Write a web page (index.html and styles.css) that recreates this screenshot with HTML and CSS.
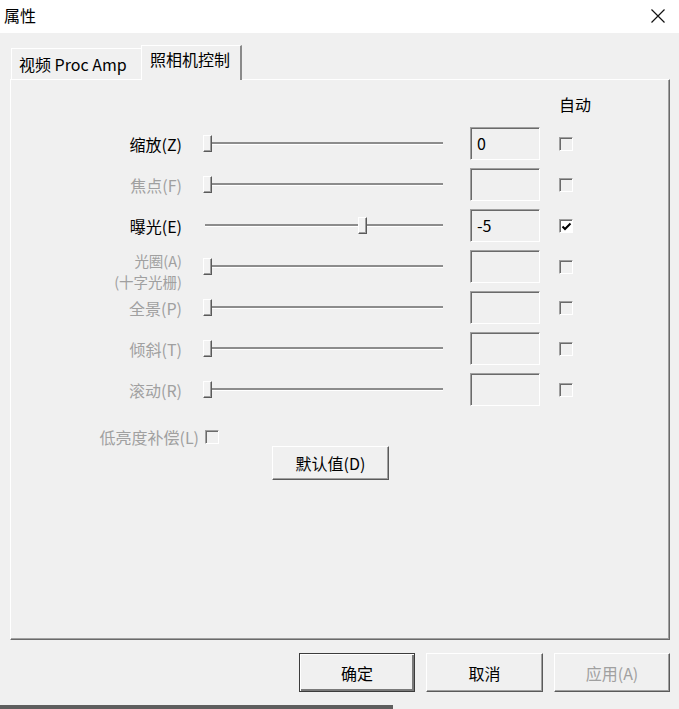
FILE: index.html
```html
<!DOCTYPE html>
<html lang="zh-CN">
<head>
    <meta charset="UTF-8">
    <title>属性</title>
    <link rel="stylesheet" href="styles.css">
</head>
<body>
    <div class="window">
        <div class="titlebar">
            <span class="title">属性</span>
            <svg class="close" width="16" height="16" viewBox="0 0 16 16">
                <path d="M1.5 1.5 L14.5 14.5 M14.5 1.5 L1.5 14.5" stroke="#111" stroke-width="1.2" fill="none"/>
            </svg>
        </div>

        <div class="content">
            <div class="tabs">
                <div class="tab">视频 Proc Amp</div>
                <div class="tab active">照相机控制</div>
            </div>

            <div class="panel">
                <div class="head-row">自动</div>

                <div class="grid">
                    <div class="label">缩放(Z)</div>
                    <div class="slider"><div class="track"></div><div class="thumb" style="left: 0px"></div></div>
                    <div class="box">0</div>
                    <div class="check-cell"><span class="check"></span></div>

                    <div class="label off">焦点(F)</div>
                    <div class="slider"><div class="track"></div><div class="thumb" style="left: 0px"></div></div>
                    <div class="box"></div>
                    <div class="check-cell"><span class="check"></span></div>

                    <div class="label">曝光(E)</div>
                    <div class="slider"><div class="track"></div><div class="thumb" style="left: 155px"></div></div>
                    <div class="box">-5</div>
                    <div class="check-cell">
                        <span class="check on">
                            <svg width="11" height="11" viewBox="0 0 11 11"><path d="M1.5 5.5 L4 8 L9.5 2.5" stroke="#000" stroke-width="2" fill="none"/></svg>
                        </span>
                    </div>

                    <div class="label off two"><span>光圈(A)</span><span>(十字光栅)</span></div>
                    <div class="slider"><div class="track"></div><div class="thumb" style="left: 0px"></div></div>
                    <div class="box"></div>
                    <div class="check-cell"><span class="check"></span></div>

                    <div class="label off">全景(P)</div>
                    <div class="slider"><div class="track"></div><div class="thumb" style="left: 0px"></div></div>
                    <div class="box"></div>
                    <div class="check-cell"><span class="check"></span></div>

                    <div class="label off">倾斜(T)</div>
                    <div class="slider"><div class="track"></div><div class="thumb" style="left: 0px"></div></div>
                    <div class="box"></div>
                    <div class="check-cell"><span class="check"></span></div>

                    <div class="label off">滚动(R)</div>
                    <div class="slider"><div class="track"></div><div class="thumb" style="left: 0px"></div></div>
                    <div class="box"></div>
                    <div class="check-cell"><span class="check"></span></div>
                </div>

                <div class="lowlight">
                    <span class="off">低亮度补偿(L)</span>
                    <span class="check"></span>
                </div>

                <div class="default-row">
                    <button class="btn default">默认值(D)</button>
                </div>
            </div>

            <div class="footer">
                <button class="btn ok">确定</button>
                <button class="btn cancel">取消</button>
                <button class="btn apply off">应用(A)</button>
            </div>
        </div>

        <div class="edge"></div>
    </div>
</body>
</html>
```

FILE: styles.css
```css
body {
    margin: 0;
    background: #f0f0f0;
    font-family: "Noto Sans CJK SC", "Noto Sans", sans-serif;
    font-size: 16px;
    color: #000;
}

.window {
    width: 679px;
    height: 709px;
    display: flex;
    flex-direction: column;
    overflow: hidden;
}

.titlebar {
    height: 33px;
    background: #fff;
    display: flex;
    align-items: center;
    justify-content: space-between;
    padding: 0 13px 0 4px;
    flex-shrink: 0;
}

.title {
    font-size: 16px;
    line-height: 20px;
    margin-top: -3px;
}

.close {
    margin-top: -1px;
}

.content {
    padding-top: 12px;
    flex: 1;
}

/* tabs */
.tabs {
    display: flex;
    align-items: flex-end;
    padding-left: 11px;
    height: 35px;
    margin-bottom: -1px;
}

.tab {
    box-sizing: border-box;
    height: 31px;
    margin-bottom: 1px;
    width: 131px;
    padding: 4px 0 0 7px;
    line-height: 22px;
    border-top: 1px solid #fff;
    border-left: 1px solid #fff;
    border-right: 1px solid #d0d0d0;
    white-space: nowrap;
}

.tab.active {
    position: relative;
    z-index: 1;
    height: 35px;
    margin-bottom: 0;
    width: 101px;
    margin-left: -1px;
    padding: 2px 0 0 8px;
    background: #f0f0f0;
    border-right: 2px solid #8a8a8a;
}

/* panel */
.panel {
    box-sizing: border-box;
    margin-left: 10px;
    width: 660px;
    height: 561px;
    border-top: 1px solid #fff;
    border-left: 1px solid #fff;
    border-right: 1px solid #6a6a6a;
    border-bottom: 1px solid #6a6a6a;
    box-shadow: inset -1px -1px 0 #a0a0a0;
}

.head-row {
    margin-top: 14px;
    height: 20px;
    line-height: 20px;
    padding-left: 548px;
    margin-bottom: 9px;
}

.grid {
    display: grid;
    grid-template-columns: 172px 287px 70px auto;
    grid-auto-rows: 41px;
    align-items: center;
}

.label {
    text-align: right;
    padding-right: 1px;
    line-height: 18px;
}

.label.two {
    display: flex;
    flex-direction: column;
    align-items: flex-end;
    margin-top: 9px;
    font-size: 14.5px;
    line-height: 21px;
}

.off {
    color: #a0a0a0;
}

.slider {
    position: relative;
    margin-left: 20px;
    width: 240px;
    height: 17px;
}

.track {
    margin: 7px 0 0 2px;
    height: 2px;
    background: #8c8c8c;
    border-bottom: 1px solid #fff;
}

.thumb {
    position: absolute;
    top: 0;
    box-sizing: border-box;
    width: 9px;
    height: 17px;
    background: #f2f2f2;
    border-top: 1px solid #fff;
    border-left: 1px solid #fff;
    border-right: 1px solid #5a5a5a;
    border-bottom: 1px solid #5a5a5a;
    box-shadow: inset -1px -1px 0 #a0a0a0;
}

.box {
    box-sizing: border-box;
    width: 70px;
    height: 33px;
    padding: 4px 0 0 6px;
    line-height: 22px;
    border-top: 1px solid #a0a0a0;
    border-left: 1px solid #a0a0a0;
    border-right: 1px solid #fff;
    border-bottom: 1px solid #fff;
    box-shadow: inset 1px 1px 0 #6a6a6a;
}

.check-cell {
    padding-left: 19px;
    padding-top: 1px;
    display: flex;
    align-items: center;
}

.check {
    box-sizing: border-box;
    display: inline-flex;
    align-items: center;
    justify-content: center;
    width: 14px;
    height: 14px;
    border-top: 1px solid #a0a0a0;
    border-left: 1px solid #a0a0a0;
    border-right: 1px solid #fff;
    border-bottom: 1px solid #fff;
    box-shadow: inset 1px 1px 0 #6a6a6a;
    background: #f0f0f0;
}

.check.on {
    background: #fff;
}

.check.on svg {
    margin: 1px 0 0 1px;
}

.lowlight {
    width: 208px;
    margin-top: 18px;
    height: 18px;
    display: flex;
    justify-content: flex-end;
    align-items: center;
    gap: 6px;
    line-height: 18px;
}

.default-row {
    padding-left: 261px;
}

/* buttons */
.btn {
    box-sizing: border-box;
    font-family: inherit;
    font-size: 16px;
    color: #000;
    background: #f0f0f0;
    border-top: 1px solid #fff;
    border-left: 1px solid #fff;
    border-right: 1px solid #5a5a5a;
    border-bottom: 1px solid #5a5a5a;
    box-shadow: inset -1px -1px 0 #a0a0a0;
    padding: 0;
}

.btn.default {
    width: 117px;
    height: 34px;
}

.footer {
    display: flex;
    justify-content: flex-end;
    gap: 11px;
    padding-right: 9px;
    margin-top: 13px;
    height: 39px;
}

.footer .btn {
    width: 116px;
    height: 39px;
}

.footer .btn.cancel {
    width: 117px;
}

.btn.ok {
    border: 1px solid #3c3c3c;
    box-shadow: inset 1px 1px 0 #fff, inset -2px -2px 0 #7a7a7a;
}

.btn.apply {
    color: #a0a0a0;
}

.edge {
    margin-top: 13px;
    width: 393px;
    height: 4px;
    background: #5e5e5e;
}
```
